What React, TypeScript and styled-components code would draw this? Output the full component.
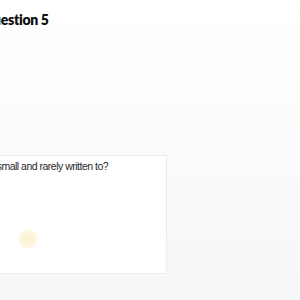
import React from "react";
import styled, { createGlobalStyle } from "styled-components";

const Global = createGlobalStyle`
  html, body { margin: 0; padding: 0; }
  body {
    width: 300px;
    height: 300px;
    overflow: hidden;
    background: linear-gradient(180deg, #ffffff 0%, #fcfcfd 40%, #f4f6f8 100%);
  }
`;

const Page = styled.main`
  display: flex;
  flex-direction: column;
  width: 300px;
  height: 300px;
  overflow: hidden;
`;

const Heading = styled.h2`
  margin: 10px 0 0 -18px;
  font-family: Lato, "Noto Sans", sans-serif;
  font-weight: 800;
  font-size: 14px;
  line-height: 20px;
  letter-spacing: -0.3px;
  color: #111;
  white-space: nowrap;
`;

const Card = styled.section`
  margin: 125px 0 0 -141px;
  width: 308px;
  height: 119px;
  box-sizing: border-box;
  background: #ffffff;
  border: 1px solid #eaecef;
  border-radius: 2px;
  padding: 3px 12px;
  display: flex;
  flex-direction: column;
`;

const QuestionText = styled.p`
  margin: 0;
  font-family: "Liberation Sans", Arial, sans-serif;
  font-size: 10.5px;
  line-height: 14px;
  letter-spacing: -0.5px;
  color: #2a2a2a;
  white-space: nowrap;
`;

const Options = styled.div`
  flex: 1;
  display: flex;
  align-items: center;
  padding-left: 146px;
`;

const Dot = styled.span`
  width: 20px;
  height: 20px;
  border-radius: 50%;
  background: radial-gradient(circle, #fdf1cf 0%, #fdf5df 50%, rgba(255,255,255,0) 100%);
  margin-top: 34px;
`;

export default function App() {
  return (
    <>
      <Global />
      <Page>
        <Heading>Question 5</Heading>
        <Card>
          <QuestionText>Which storage fits data that is small and rarely written to?</QuestionText>
          <Options>
            <Dot />
          </Options>
        </Card>
      </Page>
    </>
  );
}
